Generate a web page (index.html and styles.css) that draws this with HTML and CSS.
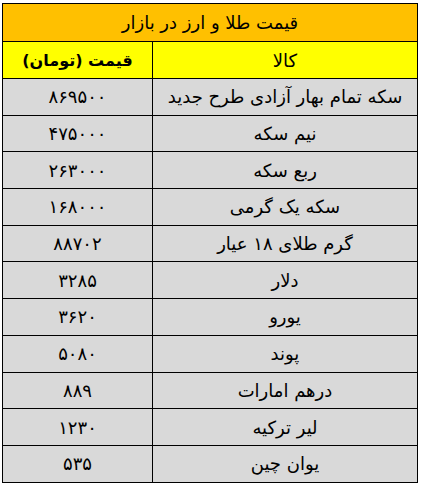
FILE: index.html
```html
<!DOCTYPE html>
<html lang="fa" dir="rtl">
<head>
<meta charset="utf-8">
<link rel="stylesheet" href="styles.css">
</head>
<body>
<div class="wrap">
<table class="prices">
  <colgroup><col class="col-name"><col class="col-price"></colgroup>
  <thead>
    <tr><th class="title" colspan="2">قیمت طلا و ارز در بازار</th></tr>
    <tr class="head"><th>کالا</th><th class="bold">قیمت (تومان)</th></tr>
  </thead>
  <tbody>
    <tr><td>سکه تمام بهار آزادی طرح جدید</td><td class="num">۸۶۹۵۰۰</td></tr>
    <tr><td>نیم سکه</td><td class="num">۴۷۵۰۰۰</td></tr>
    <tr><td>ربع سکه</td><td class="num">۲۶۳۰۰۰</td></tr>
    <tr><td>سکه یک گرمی</td><td class="num">۱۶۸۰۰۰</td></tr>
    <tr><td>گرم طلای ۱۸ عیار</td><td class="num">۸۸۷۰۲</td></tr>
    <tr><td>دلار</td><td class="num">۳۲۸۵</td></tr>
    <tr><td>یورو</td><td class="num">۳۶۲۰</td></tr>
    <tr><td>پوند</td><td class="num">۵۰۸۰</td></tr>
    <tr><td>درهم امارات</td><td class="num">۸۸۹</td></tr>
    <tr><td>لیر ترکیه</td><td class="num">۱۲۳۰</td></tr>
    <tr><td>یوان چین</td><td class="num">۵۳۵</td></tr>
  </tbody>
</table>
</div>
</body>
</html>
```
FILE: styles.css
```css
html, body {
  margin: 0;
  padding: 0;
  background: #ffffff;
}
.wrap {
  padding: 3px 4px 0 3px;
  width: 415px;
}
.prices {
  border-collapse: collapse;
  width: 415px;
  table-layout: fixed;
  font-family: "DejaVu Sans", "Noto Sans", sans-serif;
  color: #000;
}
.col-name {
  width: 265px;
}
.col-price {
  width: 150px;
}
.prices th, .prices td {
  border: 1.5px solid #000;
  text-align: center;
  padding: 0;
  font-weight: normal;
  white-space: nowrap;
}
.title {
  background: #ffc000;
  height: 37px;
  font-size: 18px;
  font-weight: bold;
}
.head th {
  background: #ffff00;
  height: 36px;
  font-size: 18px;
}
.head .bold {
  font-weight: bold;
  font-size: 16px;
}
tbody td {
  background: #d9d9d9;
  height: 35.7px;
  font-size: 18px;
}
.prices .num {
  letter-spacing: 1.5px;
  font-weight: normal;
}
```
